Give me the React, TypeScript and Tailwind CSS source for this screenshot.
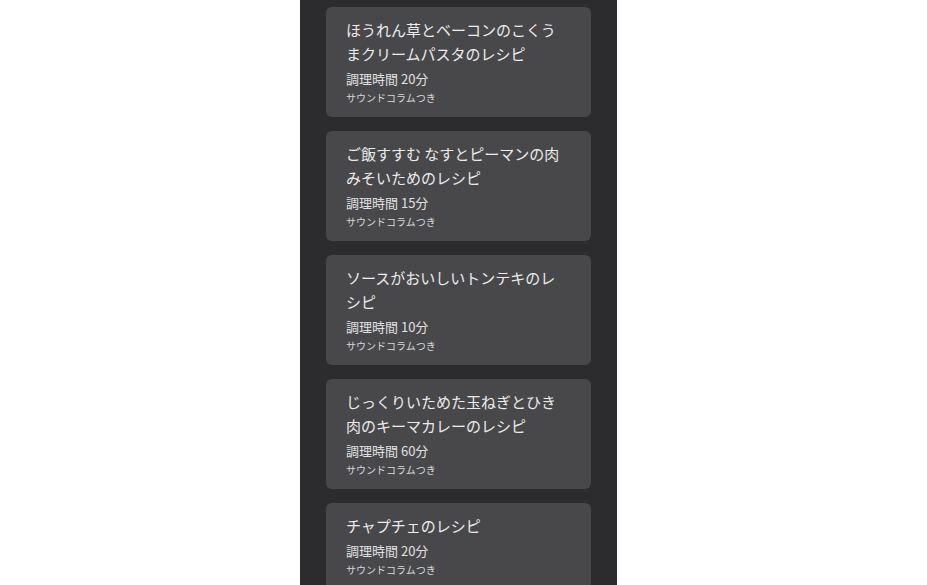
const recipes = [
  { title: 'ほうれん草とベーコンのこくうまクリームパスタのレシピ', minutes: 20 },
  { title: 'ご飯すすむ なすとピーマンの肉みそいためのレシピ', minutes: 15 },
  { title: 'ソースがおいしいトンテキのレシピ', minutes: 10 },
  { title: 'じっくりいためた玉ねぎとひき肉のキーマカレーのレシピ', minutes: 60 },
  { title: 'チャプチェのレシピ', minutes: 20 },
];

function RecipeCard({ title, minutes }: { title: string; minutes: number }) {
  return (
    <div className="rounded-md bg-[#48484a] pl-5 pr-[26px] pt-[11px] pb-3">
      <p className="text-[15px] leading-6 text-[#ebebeb]">{title}</p>
      <p className="mt-[3px] text-[13px] leading-5 text-[#e0e0e0]">調理時間 {minutes}分</p>
      <p className="mt-[1px] text-[10px] leading-[15px] text-[#d8d8d8]">サウンドコラムつき</p>
    </div>
  );
}

export default function App() {
  return (
    <div
      className="flex h-[585px] w-full justify-center overflow-hidden bg-white"
      style={{ fontFamily: '"Noto Sans CJK JP", "Noto Sans", sans-serif' }}
    >
      <div className="ml-[-10px] flex w-[317px] flex-col gap-[14px] bg-[#2c2c2e] px-[26px] pt-[7px]">
        {recipes.map((r, i) => (
          <RecipeCard key={i} title={r.title} minutes={r.minutes} />
        ))}
      </div>
    </div>
  );
}
